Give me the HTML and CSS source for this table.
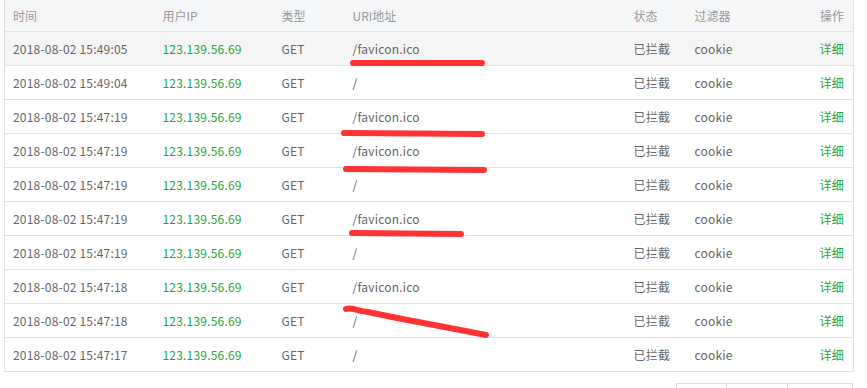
FILE: index.html
```html
<!DOCTYPE html>
<html>
<head>
<meta charset="utf-8">
<link rel="stylesheet" href="styles.css">
</head>
<body>
<div class="wrap">
  <table class="log">
    <colgroup>
      <col class="c-time"><col class="c-ip"><col class="c-type"><col class="c-uri"><col class="c-state"><col class="c-filter"><col class="c-op">
    </colgroup>
    <thead>
      <tr><th>时间</th><th>用户IP</th><th>类型</th><th>URI地址</th><th>状态</th><th>过滤器</th><th class="op">操作</th></tr>
    </thead>
    <tbody>
      <tr class="hover"><td>2018-08-02 15:49:05</td><td class="ip">123.139.56.69</td><td>GET</td><td>/favicon.ico</td><td>已拦截</td><td>cookie</td><td class="op link">详细</td></tr>
      <tr><td>2018-08-02 15:49:04</td><td class="ip">123.139.56.69</td><td>GET</td><td>/</td><td>已拦截</td><td>cookie</td><td class="op link">详细</td></tr>
      <tr><td>2018-08-02 15:47:19</td><td class="ip">123.139.56.69</td><td>GET</td><td>/favicon.ico</td><td>已拦截</td><td>cookie</td><td class="op link">详细</td></tr>
      <tr><td>2018-08-02 15:47:19</td><td class="ip">123.139.56.69</td><td>GET</td><td>/favicon.ico</td><td>已拦截</td><td>cookie</td><td class="op link">详细</td></tr>
      <tr><td>2018-08-02 15:47:19</td><td class="ip">123.139.56.69</td><td>GET</td><td>/</td><td>已拦截</td><td>cookie</td><td class="op link">详细</td></tr>
      <tr><td>2018-08-02 15:47:19</td><td class="ip">123.139.56.69</td><td>GET</td><td>/favicon.ico</td><td>已拦截</td><td>cookie</td><td class="op link">详细</td></tr>
      <tr><td>2018-08-02 15:47:19</td><td class="ip">123.139.56.69</td><td>GET</td><td>/</td><td>已拦截</td><td>cookie</td><td class="op link">详细</td></tr>
      <tr><td>2018-08-02 15:47:18</td><td class="ip">123.139.56.69</td><td>GET</td><td>/favicon.ico</td><td>已拦截</td><td>cookie</td><td class="op link">详细</td></tr>
      <tr><td>2018-08-02 15:47:18</td><td class="ip">123.139.56.69</td><td>GET</td><td>/</td><td>已拦截</td><td>cookie</td><td class="op link">详细</td></tr>
      <tr><td>2018-08-02 15:47:17</td><td class="ip">123.139.56.69</td><td>GET</td><td>/</td><td>已拦截</td><td>cookie</td><td class="op link">详细</td></tr>
    </tbody>
  </table>
  <div class="pager">
    <span class="pg pg1"></span><span class="pg pg2"></span><span class="pg pg3"></span>
  </div>
  <svg class="marks" width="867" height="388" viewBox="0 0 867 388">
    <g fill="none" stroke="#ff3333" stroke-width="6" stroke-linecap="round">
      <path d="M353 63 L482 63"/>
      <path d="M344 133 L482 134"/>
      <path d="M346 169 L484 170"/>
      <path d="M352 233 L461 234"/>
      <path d="M346 309 C352 307 356 311 368 312 C395 318 430 324 486 335"/>
    </g>
  </svg>
</div>
</body>
</html>
```
FILE: styles.css
```css
html, body {
  margin: 0;
  padding: 0;
  background: #fff;
}
.wrap {
  position: relative;
  width: 867px;
  height: 388px;
  overflow: hidden;
  padding: 0 0 0 4px;
  box-sizing: border-box;
  font-family: "Microsoft YaHei", "Noto Sans CJK SC", "Noto Sans", sans-serif;
  font-size: 12px;
  color: #666;
}
.log {
  width: 850px;
  border-collapse: collapse;
  table-layout: fixed;
  border: 1px solid #e3e3e3;
  border-top: none;
}
.c-time { width: 150px; }
.c-ip { width: 119px; }
.c-type { width: 71px; }
.c-uri { width: 281px; }
.c-state { width: 61px; }
.c-filter { width: 100px; }
.log th {
  height: 31px;
  padding: 0 0 0 8px;
  text-align: left;
  font-weight: normal;
  color: #999;
  background: #f5f6f8;
  border-bottom: 1px solid #e3e3e3;
  box-sizing: border-box;
}
.log td {
  height: 34px;
  padding: 0 0 0 8px;
  border-bottom: 1px solid #e3e3e3;
  box-sizing: border-box;
  white-space: nowrap;
  letter-spacing: 0.2px;
}
.log .op {
  text-align: right;
  padding-right: 9px;
}
.log tr.hover td {
  background: #f5f5f5;
}
.ip, .link {
  color: #22a83a;
}
.pager {
  display: flex;
  margin: 11px 0 0 673px;
}
.pg {
  display: block;
  height: 20px;
  border: 1px solid #ddd;
  box-sizing: border-box;
  margin-left: -1px;
}
.pg1 { width: 51px; }
.pg2 { width: 62px; }
.pg3 { width: 66px; }
.marks {
  position: absolute;
  left: 0;
  top: 0;
  pointer-events: none;
}
```
